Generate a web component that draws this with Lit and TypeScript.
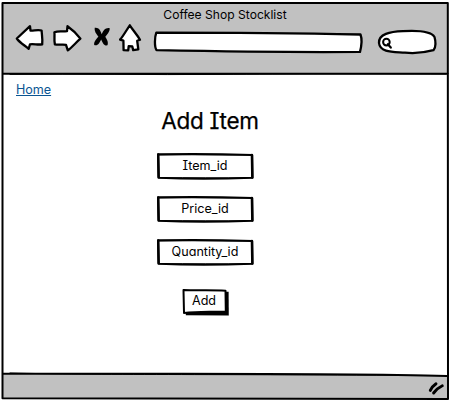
import { LitElement, html, css, svg } from "lit";
import { customElement, property } from "lit/decorators.js";

@customElement("sketch-field")
class SketchField extends LitElement {
  @property() label = "";
  static styles = css`
    :host { display: grid; width: 98px; height: 28px; }
    svg, span { grid-area: 1 / 1; }
    span { place-self: center; margin-top: -1px; white-space: nowrap; }
  `;
  render() {
    return html`
      <svg width="98" height="28" viewBox="0 0 98 28" fill="none" stroke="#000" stroke-linecap="round" stroke-linejoin="round">
        <path d="M2 2.4 C30 1.7 66 2 96.2 3 L96.5 25.7 C66 26.9 31 27 2.5 25.7 Z" fill="#fff" stroke-width="2.1"/>
        <path d="M2.3 2.5 L2.7 25 M95.9 3 L96.3 25.5" stroke-width="2.4"/>
        <path d="M3 2.8 C35 2.4 65 3.3 96 3 M3 25.8 C35 25.4 65 26.2 95 25.7" stroke-width="1"/>
      </svg>
      <span>${this.label}</span>`;
  }
}

const arrowLeft = svg`<path d="M16.8 38.5 L30 26.2 L30.5 30.6 C34 30.8 38 29.2 41.6 30.5 C41.8 35 42.8 39 42.2 44.3 C38 45.1 34 43.7 30 44.3 L28.7 48.8 C24.5 45.2 20 43 16.8 38.5 Z"/>`;
const arrowRight = svg`<path d="M54.4 32.2 C58 30.7 62 31.8 67 31.2 L67.5 26.2 C72 29.3 77 34 80.4 38.7 C76 42.5 72 47.2 67.8 50.4 L66 44.8 C62 44 59 45.3 54.9 44.4 C53.8 40 54.9 36 54.4 32.2 Z"/>`;
const home = svg`<path d="M129.8 25.3 C132.8 30 137 34.5 140 39.7 L137.2 40.8 L138.3 49.4 L133.2 50.2 L132.3 46.4 L128.7 46.2 L128.2 50.3 L123.6 50.2 L123.4 40.6 L120.1 39.6 C123.8 35.3 126.5 30 129.8 25.3 Z"/>`;

@customElement("app-root")
class AppRoot extends LitElement {
  static styles = css`
    :host {
      display: flex; flex-direction: column; position: relative;
      width: 451px; height: 404px; overflow: hidden; background: #fff; color: #000;
      font: 12.6px/16px Inter, "Noto Sans", sans-serif;
      font-feature-settings: "cv11" 1, "cv08" 1;
    }
    .frame { position: absolute; inset: 0; }
    header { position: relative; height: 74px; display: grid; }
    .tools, .title { grid-area: 1 / 1; }
    .title { justify-self: center; margin: 7px 1px 0 0; font-size: 12.1px; }
    main { position: relative; flex: 1; display: flex; flex-direction: column; align-items: center; padding-right: 41px; }
    .link { align-self: flex-start; margin: 8px 0 0 16px; color: #0b5592; text-decoration: underline; text-decoration-thickness: 1px; text-underline-offset: 1px; letter-spacing: -.05px; }
    h1 { margin: 8px 0 0 10px; font-size: 22.5px; font-weight: 400; line-height: 30px; letter-spacing: -.25px; white-space: nowrap; -webkit-text-stroke: .25px #000; }
    .fields { display: grid; gap: 15px; margin-top: 16px; }
    .add { display: grid; width: 48px; height: 29px; margin-top: 21px; }
    .add svg, .add span { grid-area: 1 / 1; }
    .add span { place-self: center; margin: -2px 2px 0 0; }
  `;
  render() {
    return html`
      <svg class="frame" width="451" height="404" viewBox="0 0 451 404" fill="none" stroke="#000" stroke-linecap="round" stroke-linejoin="round">
        <path d="M2.5 3 H448 V74 H2.5 Z M2.5 374 L280 373.6 L448 376 V399 H2.5 Z" fill="#c1c1c1" stroke="none"/>
        <path d="M2.5 2.9 L447.8 3 L448 399 L2.5 398.2 Z M3 73.8 L448 73.6 M3 373.6 C160 374.3 305 372.4 447 375.9" stroke-width="2"/>
        <path d="M10 74.4 C80 73.5 150 75.1 220 74.4 S360 73.6 446 74 M10 373 C100 375.1 200 374.1 440 375.5" stroke-width="1"/>
        <path d="M430.3 390.4 Q431.8 386.8 436 383.8 M433.6 393 Q437.5 388 442.3 385.8" stroke-width="2.9"/>
      </svg>
      <header>
        <svg class="tools" width="451" height="74" viewBox="0 0 451 74" fill="#fff" stroke="#000" stroke-width="2.3" stroke-linecap="round" stroke-linejoin="round">
          ${arrowLeft}${arrowRight}
          <path d="M94.7 27.8 C98.5 27 100.3 30 101.8 34.2 C103.2 30.5 105.5 27.4 109.7 28.2 C110 31.5 107 34.5 105.3 36.8 C106.8 39.5 108.7 42 107.5 45.3 C104 46 102.7 43 101.2 39.4 C99.5 42.5 98 46.3 94.2 45 C93.8 41.5 96.3 39 98.4 36.7 C96.3 34 94 31 94.7 27.8 Z" fill="#000" stroke="none"/>
          ${home}
          <path d="M156.3 32.7 C220 32.7 296 33.2 360.5 34.5 C362.2 39 361.5 46 360 51.9 C295 52.5 215 51.3 156.5 50.2 C154.3 47 154.6 37 156.3 32.7 Z"/>
          <path d="M379 43 C378.5 34 390 31.7 403 31.2 C418 30.3 431 31.2 434.5 37 C435.7 41 436.2 47.5 433.5 50.2 C427 52 415 53.6 405 52.7 C394 51.8 380 53 379 43 Z"/>
          <circle cx="386.4" cy="42.1" r="3.3" stroke-width="2"/>
          <path d="M387.8 44.2 L390.8 47.6" stroke-width="2.2"/>
        </svg>
        <span class="title">Coffee Shop Stocklist</span>
      </header>
      <main>
        <a class="link">Home</a>
        <h1>Add Item</h1>
        <div class="fields">
          <sketch-field label="Item_id"></sketch-field>
          <sketch-field label="Price_id"></sketch-field>
          <sketch-field label="Quantity_id"></sketch-field>
        </div>
        <div class="add">
          <svg width="48" height="29" viewBox="0 0 48 29">
            <path d="M4.8 5 L47.6 4.8 L47.8 28.5 L4.8 28.2 Z"/>
            <path d="M2.5 3 C16 3.7 30 2.8 44.5 3.7 L44.8 24.4 C30 25.1 17 24.4 3 25.9 Z" fill="#fff" stroke="#000" stroke-width="2" stroke-linejoin="round"/>
          </svg>
          <span>Add</span>
        </div>
      </main>`;
  }
}
